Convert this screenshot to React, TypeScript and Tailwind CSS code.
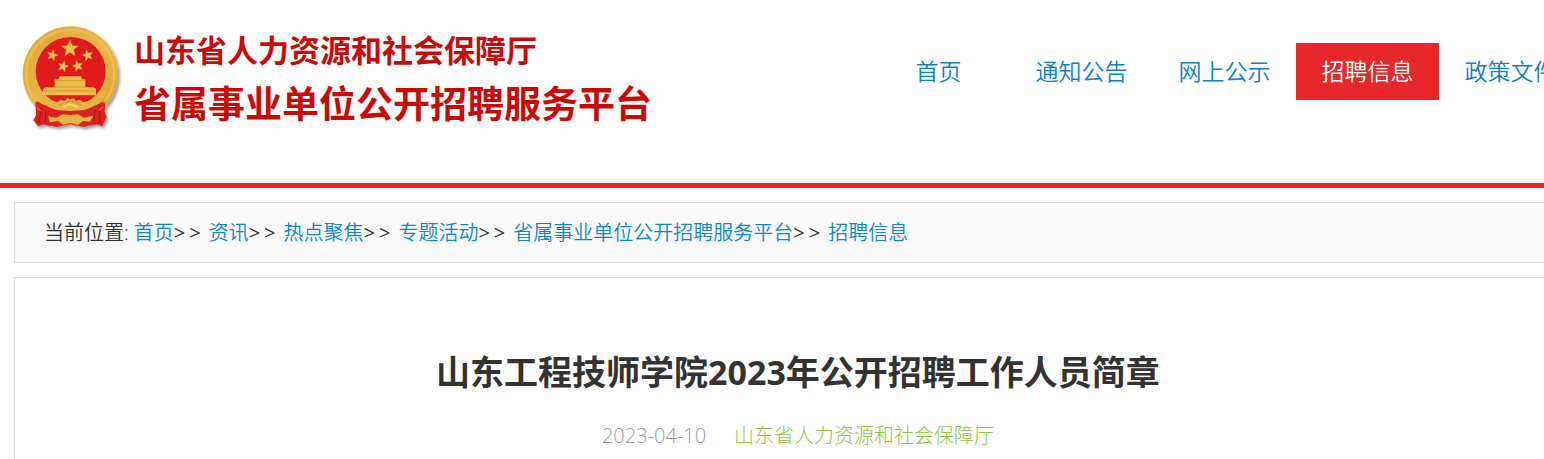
import React from "react";

const navItems = [
  { label: "首页" },
  { label: "通知公告" },
  { label: "网上公示" },
  { label: "招聘信息", active: true },
  { label: "政策文件" },
];

const crumbs = [
  "首页",
  "资讯",
  "热点聚焦",
  "专题活动",
  "省属事业单位公开招聘服务平台",
  "招聘信息",
];

const STAR =
  "M0 -10L2.6 -3.4L9.5 -3.1L4.1 1.3L5.9 8.1L0 4.3L-5.9 8.1L-4.1 1.3L-9.5 -3.1L-2.6 -3.4Z";

function Emblem() {
  return (
    <svg
      className="h-[120px] w-[110px] shrink-0"
      viewBox="12 3 330 360"
      aria-hidden="true"
    >
      <defs>
        <linearGradient id="gold" x1="0" y1="0" x2="1" y2="1">
          <stop offset="0" stopColor="#dba535" />
          <stop offset="0.5" stopColor="#e9b64a" />
          <stop offset="1" stopColor="#d9a12c" />
        </linearGradient>
        <filter id="shadow" x="-10%" y="-10%" width="125%" height="125%">
          <feDropShadow dx="6" dy="7" stdDeviation="4" floodOpacity="0.4" />
        </filter>
      </defs>
      <g filter="url(#shadow)">
        {/* wheat ring */}
        <ellipse cx="181" cy="177" rx="143" ry="143" fill="url(#gold)" />
        {/* ribbons */}
        <path
          d="M76 255L104 272L126 290L124 334L100 328L84 334L70 316L78 300Z"
          fill="#d8201d"
        />
        <path
          d="M286 255L260 270L238 290L238 332L262 328L276 334L290 306L284 292Z"
          fill="#d8201d"
        />
        <path
          d="M76 262Q181 300 286 262L270 322L222 336L181 328L140 336L92 324Z"
          fill="#da2320"
        />
      </g>
      <ellipse
        cx="181"
        cy="177"
        rx="132"
        ry="132"
        fill="none"
        stroke="#f0c65e"
        strokeWidth="7"
        strokeDasharray="600 231"
        transform="rotate(140 181 177)"
        opacity="0.7"
      />
      {/* red field */}
      <ellipse cx="182" cy="169" rx="105" ry="103" fill="#e01b1b" />
      <g fill="#f0c04c" stroke="#c98d25" strokeWidth="0.4">
        <path d={STAR} transform="translate(180 101) scale(2.7)" />
        <path d={STAR} transform="translate(127 121) scale(1.8) rotate(15)" />
        <path d={STAR} transform="translate(233 121) scale(1.8) rotate(-15)" />
        <path d={STAR} transform="translate(159 154) scale(1.8) rotate(15)" />
        <path d={STAR} transform="translate(203 153) scale(1.8) rotate(-15)" />
      </g>
      {/* gate */}
      <path
        d="M148 184H213L216 193H226V217H252L258 222V241H99V222L106 217H134V193H145Z"
        fill="#efbd4b"
      />
      <path
        d="M134 197H226M134 216H226M100 228H258"
        stroke="#d39b35"
        strokeWidth="3"
      />
      {/* lower wreath and cog */}
      <path
        d="M70 222Q110 256 142 262L152 254L164 258L172 249L181 254L190 249L198 258L210 254L220 262Q252 256 292 222Q280 268 222 285L181 288L140 285Q82 268 70 222Z"
        fill="#e9b444"
      />
      <path
        d="M146 272Q181 246 216 272"
        fill="none"
        stroke="#c58a28"
        strokeWidth="3"
      />
      <path
        d="M160 277Q181 260 202 277"
        fill="none"
        stroke="#f7d87c"
        strokeWidth="5"
      />
      <path
        d="M114 304L140 308L158 298L181 300L204 298L222 308L250 302L240 320L218 318L204 330L181 324L160 330L144 318L120 322Z"
        fill="#e8b444"
      />
      <path
        d="M94 276L88 324M108 284L106 320M268 276L270 322M254 284L252 318"
        stroke="#ad1414"
        strokeWidth="4"
      />
      <path d="M80 278L94 288M280 276L266 286" stroke="#f0574a" strokeWidth="4" />
    </svg>
  );
}

function Header() {
  return (
    <header className="border-b-[5px] border-[#e6282a]">
      <div className="mx-3.5 flex h-[183px] items-start justify-between">
        <a href="#" className="flex pt-4 text-[#c90b07]">
          <Emblem />
          <div className="ml-2.5 pt-2.5 font-bold whitespace-nowrap">
            <p className="text-[31px] leading-[48px]">
              山东省人力资源和社会保障厅
            </p>
            <p className="text-[37px] leading-[60px]">
              省属事业单位公开招聘服务平台
            </p>
          </div>
        </a>
        <nav className="flex pt-[43px]">
          {navItems.map((item) => (
            <a
              key={item.label}
              href="#"
              className={`w-[143px] text-center text-[23px] leading-[57px] font-[350] ${
                item.active ? "bg-[#e6282a] text-white" : "text-[#0b80cb]"
              }`}
            >
              {item.label}
            </a>
          ))}
        </nav>
      </div>
    </header>
  );
}

function Breadcrumb() {
  return (
    <div className="mx-3.5 mt-3.5 flex border border-[#dddddd] bg-[#f9f9f9] px-[29px] pt-px text-xl leading-[58px] font-[350] whitespace-nowrap text-[#333333]">
      <span className="mr-[5px]">当前位置:</span>
      {crumbs.map((crumb, i) => (
        <React.Fragment key={crumb}>
          <a href="#" className="text-[#0b86d0]">
            {crumb}
          </a>
          {i < crumbs.length - 1 && (
            <span className="mr-2 flex gap-1 font-normal">
              <span>&gt;</span>
              <span>&gt;</span>
            </span>
          )}
        </React.Fragment>
      ))}
    </div>
  );
}

export default function App() {
  return (
    <div className="overflow-hidden bg-white font-['Open_Sans','Noto_Sans_CJK_SC',sans-serif]">
      <div className="min-w-[1596px]">
        <Header />
        <Breadcrumb />
        <main className="mx-3.5 mt-3.5 border border-b-0 border-[#dddddd] px-8 pt-[68px] pb-[9px] text-center">
          <h1 className="text-[34px] leading-[52px] font-bold text-[#333333]">
            山东工程技师学院2023年公开招聘工作人员简章
          </h1>
          <div className="mt-6 flex justify-center gap-7 text-xl leading-7 font-light">
            <time className="text-[#999999]" dateTime="2023-04-10">
              2023-04-10
            </time>
            <span className="text-[#8dc63f]">山东省人力资源和社会保障厅</span>
          </div>
        </main>
      </div>
    </div>
  );
}
